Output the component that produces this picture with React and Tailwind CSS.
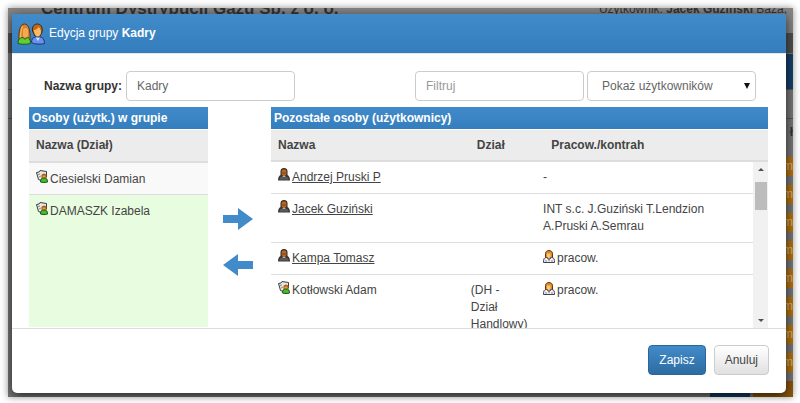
import React, { useState } from 'react';
import clsx from 'clsx';

const MEMBERS = [
  { id: 1, name: 'Ciesielski Damian' },
  { id: 2, name: 'DAMASZK Izabela', selected: true },
];

const OTHERS = [
  { id: 1, name: 'Andrzej Pruski P', user: true, contractor: '-' },
  { id: 2, name: 'Jacek Guziński', user: true, contractor: 'INT s.c. J.Guziński T.Lendzion A.Pruski A.Semrau' },
  { id: 3, name: 'Kampa Tomasz', user: true, employee: true, contractor: 'pracow.' },
  { id: 4, name: 'Kotłowski Adam', dept: '(DH - Dział Handlowy)', employee: true, contractor: 'pracow.' },
];

const GroupIcon = () => (
  <svg width="28" height="22" viewBox="0 0 28 22" className="shrink-0">
    <path d="M2 17C1.500 8 3 1 7.500 1S13.500 8 13 17z" fill="#d9822a" stroke="#5a3410" />
    <path d="M6 7c1-3 4-3 5 0v6c-1 2-4 2-5 0z" fill="#f3a955" />
    <path d="M5.500 3.500C3.500 7 3.500 12 3.500 16" stroke="#f7b44a" strokeWidth="1.500" fill="none" />
    <path d="M1 20.500c0-4 1.500-5.500 5-6 1 2 3 2 4 0 2 0 3.500 2 3.500 6-3 1-9.500 1-12.500 0z" fill="#5fcf35" stroke="#1d5a16" />
    <path d="M15.500 8c-.5-5 2-7 5-7S26 4 25 9l-2 4h-5z" fill="#b96a1c" stroke="#3a2410" />
    <path d="M17 7c2 0 3.500-1 4.500-3 1.500 1 2.500 3 2.500 5 0 3-2 4.500-3.500 4.500S17 11 17 7z" fill="#ffb964" />
    <path d="M14.500 19.500c0-3.500 1.500-5.500 4.500-5.500l2 2 2-2c3 0 4.500 3 4.500 6.500-3 1-10 1-13-1z" fill="#6a92ea" stroke="#1c3580" />
    <path d="M18.500 14l2.500 4 2-4-2 1z" fill="#dfe8ff" />
  </svg>
);

const UserIcon = () => (
  <svg width="12" height="13" viewBox="0 0 12 13" className="shrink-0">
    <path d="M2.500 8V3c0-4 7-4 7 0v5z" fill="#3a2415" />
    <path d="M3.500 3.500c0-3 5-3 5 0V6L7 8.500H5L3.500 6z" fill="#b0682c" />
    <path d="M4 4.500h4v1H4z" fill="#7a4420" />
    <path d="M0 12.500C0 9 1 7.500 3 7l3 2.500L9 7c2 .5 3 2 3 5.500z" fill="#38383c" />
    <path d="M1.500 11.500c.5-2 2-3 3-2.500L6 10.500 8 9c1.500 0 2.500 1 2.500 2.500z" fill="#5d5d63" />
  </svg>
);

const CardIcon = () => (
  <svg width="12" height="13" viewBox="0 0 12 13" className="shrink-0">
    <path d="M.5 2.500L3 2l1-1.500 6.500 1V7L5 10.500l-2.500-1z" fill="#e6e6e2" stroke="#3c3c3c" />
    <path d="M2 4.500l2-.5M3 7l2-1" stroke="#8a8a8a" fill="none" />
    <path d="M5.500 8.500V5.500C5.500 3 10.500 3 10.500 5.500v3z" fill="#a85a1a" />
    <path d="M6.500 5.500h3V8h-3z" fill="#f09a40" />
    <path d="M4.500 12c0-3 1-4 3.500-4s3.500 1 3.500 4c-2 .7-5 .7-7 0z" fill="#4cb82e" stroke="#1a5a14" />
  </svg>
);

const EmployeeIcon = () => (
  <svg width="12" height="13" viewBox="0 0 12 13" className="shrink-0">
    <path d="M2.500 8V3.500C2.500-.5 9.500-.5 9.500 3.500V8z" fill="#e08a1e" stroke="#5a3a14" />
    <path d="M4 3.500h3.500V7L6 8.500 4 7z" fill="#ffc57c" />
    <path d="M.5 12.500c0-3.500.5-5 3-5l2.500 2 2.500-2c2.500 0 3 1.500 3 5z" fill="#f2f2f5" stroke="#44444c" />
    <path d="M5 9l1 3 1-3z" fill="#8a6ab0" />
    <path d="M3 10v2M9 10v2" stroke="#8a8a92" />
  </svg>
);

const ArrowIcon = ({ left }) => (
  <svg width="30" height="22" viewBox="0 0 30 22" className={clsx(left && 'rotate-180')}>
    <path d="M0 7h15V0l15 11-15 11v-7H0z" fill="#428bca" />
  </svg>
);

const PanelTitle = ({ children }) => (
  <h3 className="mb-px h-[22px] bg-linear-to-b from-[#428bca] to-[#357ebd] px-[3px] text-[12px] leading-[22px] font-bold text-white">
    {children}
  </h3>
);

const Person = ({ icon, children }) => (
  <div className="flex items-start gap-0.5">
    {icon}
    <span className="pt-px">{children}</span>
  </div>
);

// The application page that stays dimmed under the dialog
const PageBehind = () => (
  <div aria-hidden="true" className="col-start-1 row-start-1 flex min-w-0 flex-col overflow-hidden bg-[#777] text-[#333]">
    <div className="flex h-[25px] items-start justify-between bg-[#858585] pr-1.5 pl-[33px]">
      <div className="-mt-2 text-[17px] leading-[17px] font-bold">Centrum Dystrybucji Gazu Sp. z o. o.</div>
      <div className="-mt-1.5 text-[12px] leading-[14px]">Użytkownik: <b>Jacek Guziński</b> Baza,</div>
    </div>
    <div className="h-[20px] bg-[#505050]" />
    <div className="mt-px flex justify-end">
      <div className="h-[35px] w-12 bg-[#17416a]" />
    </div>
    <div className="h-[30px] border-y border-[#555]" />
    <div className="h-[38px] pt-[5px] text-right text-[12px] font-bold">ł</div>
    <div className="flex flex-1 flex-col items-end gap-[9px]">
      {[0, 1, 2, 3, 4, 5, 6, 7].map((n) => (
        <div key={n} className="h-[19px] w-10 shrink-0 bg-[#b37210] text-right text-[12px] leading-[18px] text-[#d8b27a]">ym</div>
      ))}
      <div className="flex h-4 shrink-0 gap-[3px]">
        <div className="w-10 bg-[#123a63]" />
        <div className="w-10 bg-[#8a560c]" />
      </div>
    </div>
  </div>
);

const MembersPanel = () => (
  <section className="min-w-0">
    <PanelTitle>Osoby (użytk.) w grupie</PanelTitle>
    <div className="h-[197px] overflow-hidden">
      <table className="w-full table-fixed">
        <thead>
          <tr className="h-8 border-b-2 border-[#ddd] bg-[#ececec] text-left">
            <th className="px-[7px]">Nazwa (Dział)</th>
          </tr>
        </thead>
        <tbody>
          {MEMBERS.map((m) => (
            <tr
              key={m.id}
              className={clsx('border-b border-[#ddd] align-top', m.selected ? 'h-[168px] bg-[#e8fde0]' : 'h-8 bg-[#f9f9f9]')}
            >
              <td className="px-[7px] pt-[7px]">
                <Person icon={<CardIcon />}>{m.name}</Person>
              </td>
            </tr>
          ))}
        </tbody>
      </table>
    </div>
  </section>
);

const Columns = () => (
  <colgroup>
    <col className="w-[40%]" />
    <col className="w-[15%]" />
    <col className="w-[45%]" />
  </colgroup>
);

const OthersPanel = () => (
  <section className="min-w-0">
    <PanelTitle>Pozostałe osoby (użytkownicy)</PanelTitle>
    <table className="w-full table-fixed">
      <Columns />
      <thead>
        <tr className="h-[31px] border-b-2 border-[#ddd] bg-[#ececec] text-left">
          <th className="px-[7px]">Nazwa</th>
          <th className="px-[7px]">Dział</th>
          <th className="px-[7px]">Pracow./kontrah</th>
        </tr>
      </thead>
    </table>
    <div className="flex h-[166px] overflow-hidden">
      <div className="min-w-0 flex-1">
        <table className="w-full table-fixed">
          <Columns />
          <tbody>
            {OTHERS.map((p) => (
              <tr key={p.id} className="border-b border-[#ddd] align-top">
                <td className="px-[7px] py-1.5">
                  <Person icon={p.user ? <UserIcon /> : <CardIcon />}>
                    {p.user ? <a href="#" className="underline">{p.name}</a> : p.name}
                  </Person>
                </td>
                <td className="px-[7px] py-[7px]">{p.dept}</td>
                <td className="px-[7px] py-[7px]">
                  {p.employee ? (
                    <div className="flex items-start gap-0.5">
                      <EmployeeIcon />
                      {p.contractor}
                    </div>
                  ) : p.contractor}
                </td>
              </tr>
            ))}
          </tbody>
        </table>
      </div>
      {/* Scroll bar */}
      <div className="flex w-[15px] flex-col items-center bg-[#f1f1f1] py-1.5">
        <svg width="6" height="3" viewBox="0 0 6 3"><path d="M0 3l3-3 3 3z" fill="#505050" /></svg>
        <div className="mt-[11px] h-7 w-3 bg-[#bcbcbc]" />
        <svg width="6" height="3" viewBox="0 0 6 3" className="mt-auto"><path d="M0 0h6L3 3z" fill="#505050" /></svg>
      </div>
    </div>
  </section>
);

const fieldClass = 'h-[30px] w-full rounded-[4px] border border-[#ccc] bg-white text-[12px] text-[#666] outline-none';

export default function App() {
  const [name, setName] = useState('Kadry');
  const [filter, setFilter] = useState('');

  return (
    <div className="min-h-screen bg-white pt-2 pr-[7px] pb-[7px] pl-2 font-['Liberation_Sans',Arial,sans-serif] text-[12px] leading-[17px] text-[#444]">
      <div className="grid grid-cols-1 overflow-hidden shadow-[0_0_7px_rgba(0,0,0,0.45)]">
        <PageBehind />

        <div
          role="dialog"
          aria-labelledby="dialog-title"
          className="z-10 col-start-1 row-start-1 mt-1.5 mr-[7px] mb-1 ml-1 min-w-0 rounded-b-[5px] bg-white shadow-[0_3px_12px_rgba(0,0,0,0.7)]"
        >
          <header className="flex h-[39px] items-center gap-1 bg-linear-to-b from-[#428bca] to-[#357ebd] pl-[5px] text-white">
            <GroupIcon />
            <h2 id="dialog-title" className="text-[12px]">Edycja grupy <b>Kadry</b></h2>
          </header>

          <div className="border-t border-[#e5e5e5] pt-[17px] pr-[18px] pl-[17px]">
            <div className="mb-1.5 flex items-center pr-3 pl-[13px]">
              <label htmlFor="group-name" className="mr-1 w-20 text-right font-bold whitespace-nowrap text-[#333]">Nazwa grupy:</label>
              <div className="w-[169px]">
                <input id="group-name" className={clsx(fieldClass, 'px-2.5')} value={name} onChange={(e) => setName(e.target.value)} />
              </div>
              <div className="ml-auto w-[169px]">
                <input
                  aria-label="Filtruj"
                  placeholder="Filtruj"
                  className={clsx(fieldClass, 'px-2.5 placeholder:text-[#999]')}
                  value={filter}
                  onChange={(e) => setFilter(e.target.value)}
                />
              </div>
              <div className="relative ml-[3px] w-[169px]">
                <select aria-label="Pokaż" className={clsx(fieldClass, 'appearance-none px-3.5')}>
                  <option>Pokaż użytkowników</option>
                </select>
                <svg width="6" height="6" viewBox="0 0 6 6" className="pointer-events-none absolute top-3 right-1.5">
                  <path d="M0 0h6L3 6z" fill="#111" />
                </svg>
              </div>
            </div>

            <div className="grid grid-cols-[179fr_63px_497fr]">
              <MembersPanel />
              <div className="flex flex-col items-start gap-6 pt-[101px] pl-[15px]">
                <button type="button" title="Usuń z grupy"><ArrowIcon /></button>
                <button type="button" title="Dodaj do grupy"><ArrowIcon left /></button>
              </div>
              <OthersPanel />
            </div>
          </div>

          <footer className="flex justify-end gap-2 border-t border-[#ddd] px-[17px] py-4">
            <button type="button" className="h-[30px] rounded-[4px] border border-[#2b669a] bg-linear-to-b from-[#428bca] to-[#2d6ca2] px-2.5 text-white">
              Zapisz
            </button>
            <button type="button" className="h-[30px] rounded-[4px] border border-[#ccc] bg-linear-to-b from-white to-[#e0e0e0] px-2.5">
              Anuluj
            </button>
          </footer>
        </div>
      </div>
    </div>
  );
}
